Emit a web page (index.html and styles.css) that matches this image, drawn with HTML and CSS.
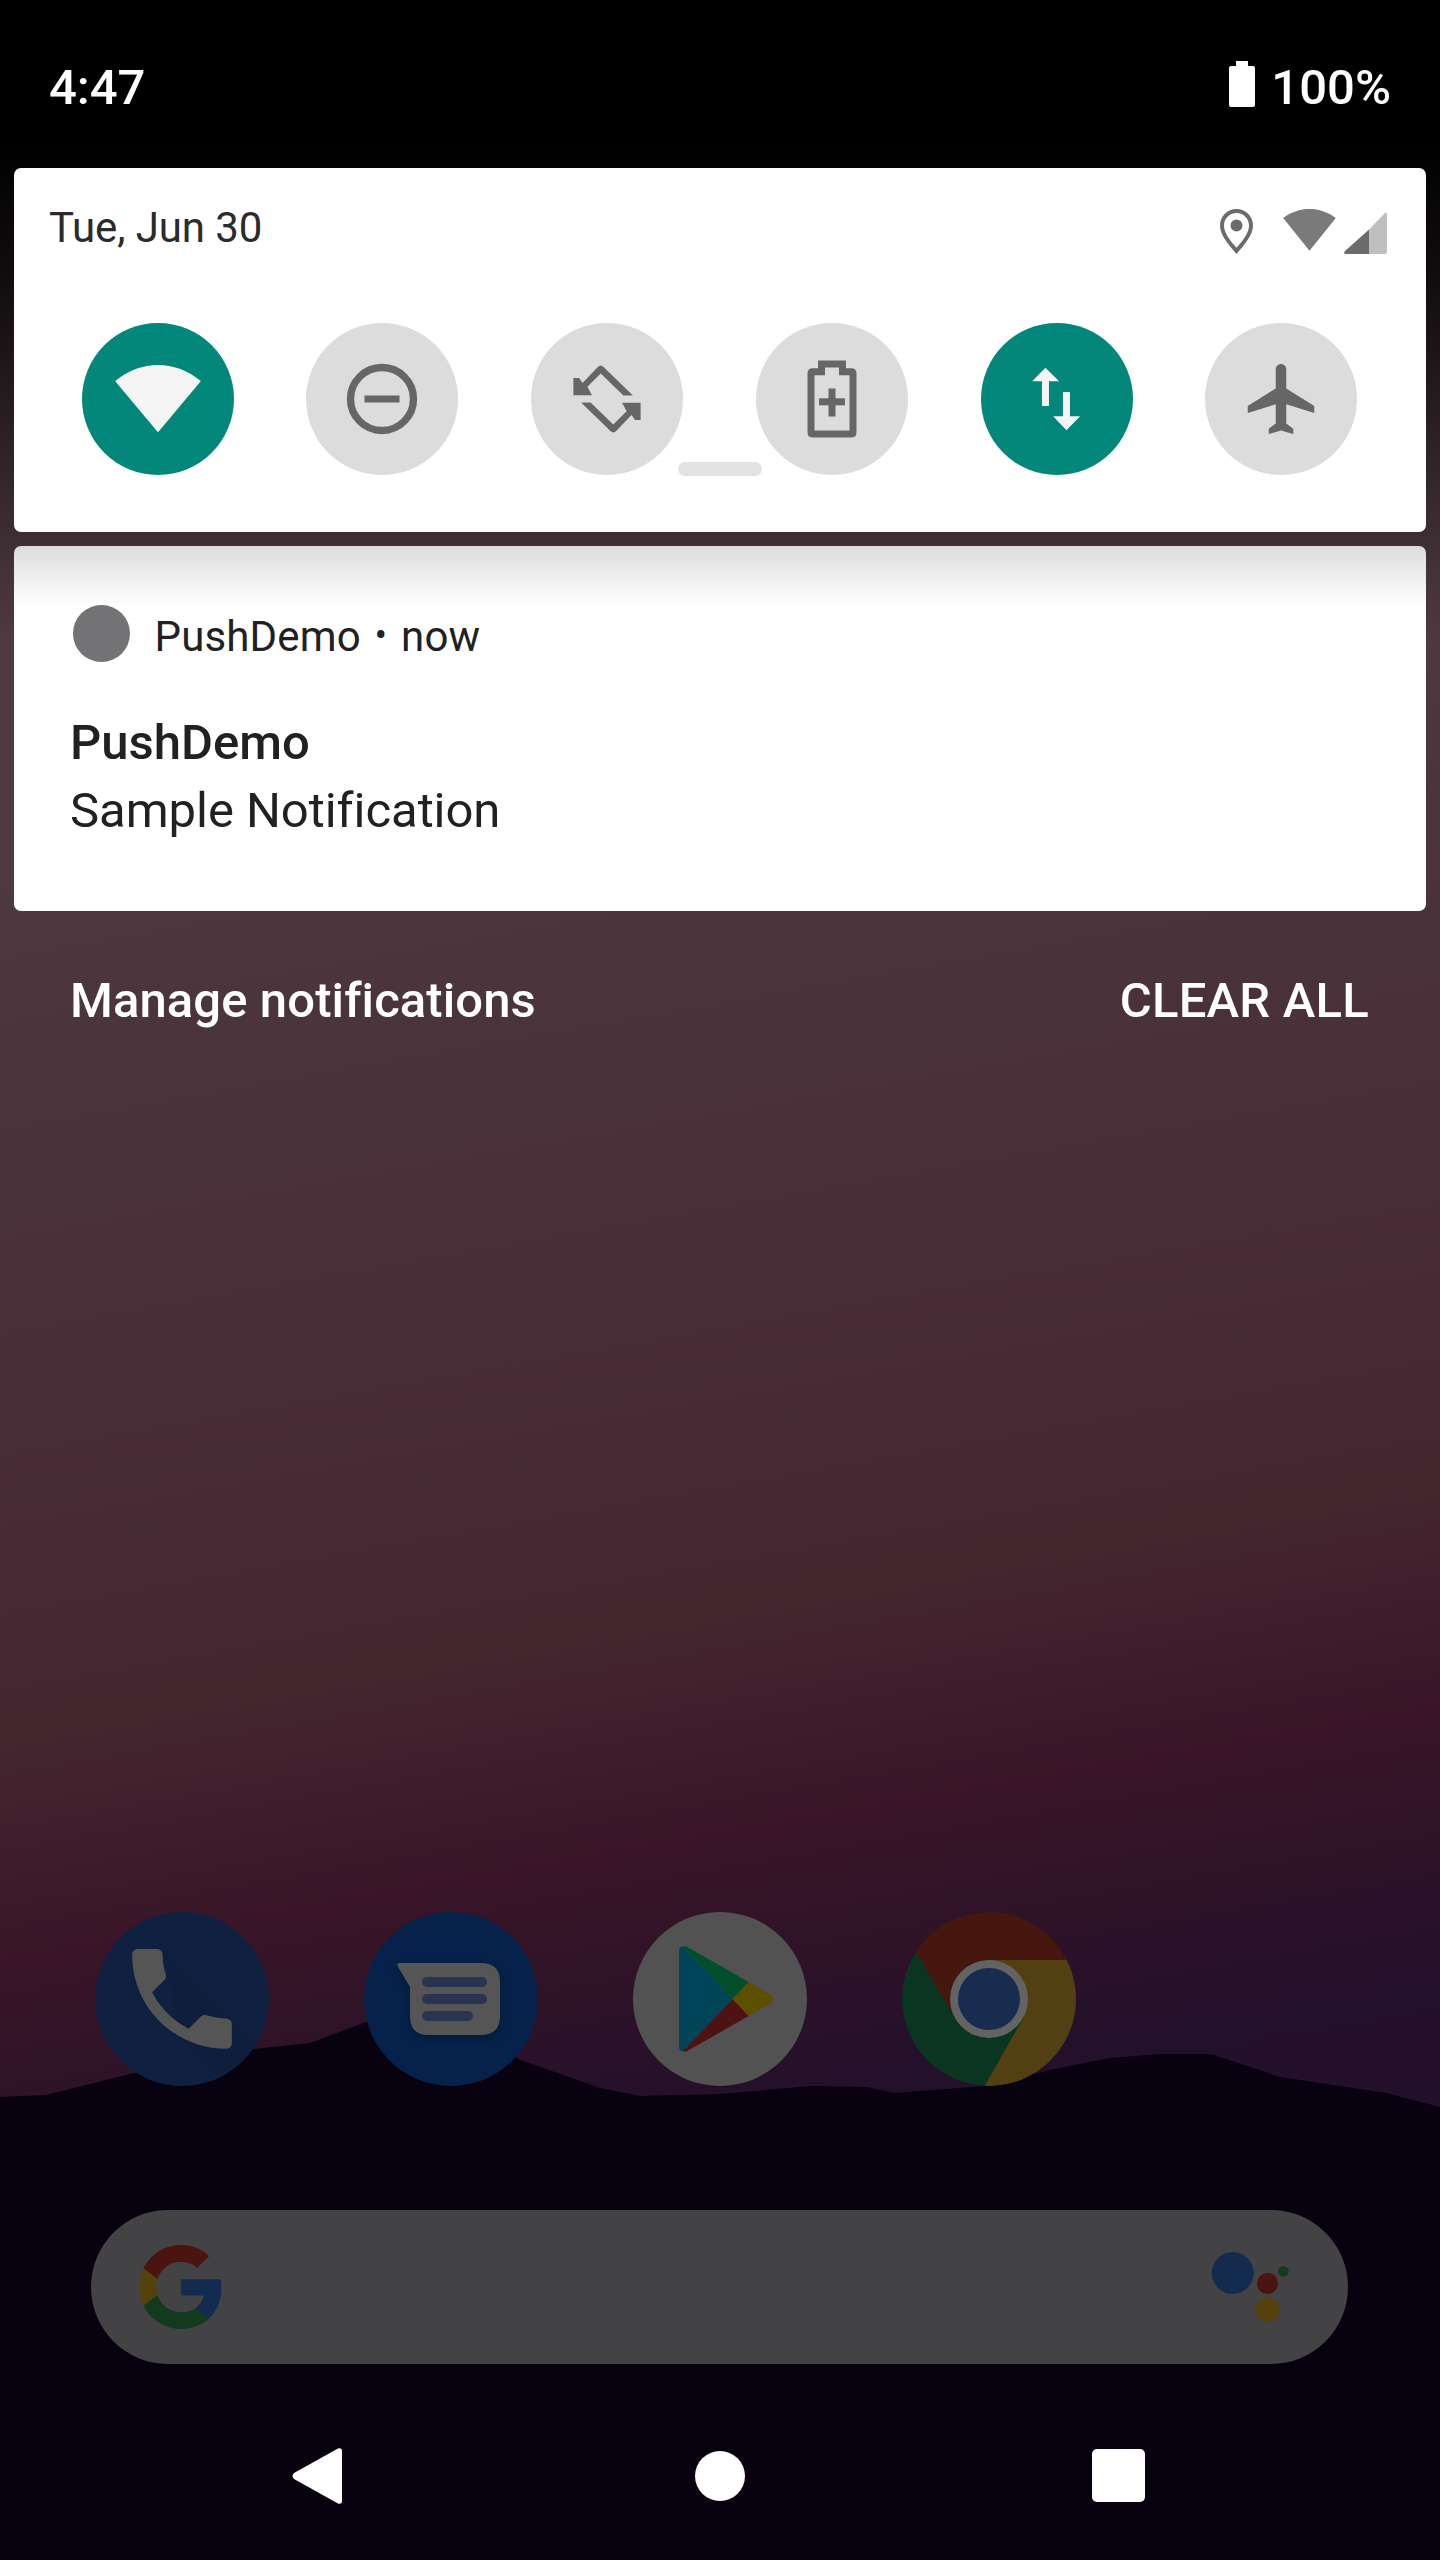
FILE: index.html
```html
<!DOCTYPE html>
<html lang="en">

<head>
    <meta charset="UTF-8">
    <meta name="viewport" content="width=device-width, initial-scale=1.0">
    <title>Notification shade</title>
    <link rel="stylesheet" href="styles.css">
</head>

<body>
    <!-- wallpaper sits behind everything -->
    <div class="wallpaper">
        <svg class="mountains" viewBox="0 0 1440 560" preserveAspectRatio="none">
            <path d="M0 97 L46 95 L130 74 L253 49 L310 43 L366 22 L450 8 L518 59 L600 88 L640 96 L720 94 L812 86 L867 87 L894 93 L986 86 L1050 70 L1110 58 L1160 54 L1211 54 L1280 77 L1386 93 L1440 107 V560 H0 Z" />
        </svg>
    </div>
    <div class="scrim"></div>

    <div class="page">
        <header class="status-bar">
            <span class="status-text">4:47</span>
            <div class="battery">
                <svg class="battery-icon" viewBox="0 0 26 46">
                    <path d="M7 0h12v5h5q2 0 2 2v37q0 2-2 2H2q-2 0-2-2V7q0-2 2-2h5z" />
                </svg>
                <span class="status-text">100%</span>
            </div>
        </header>

        <section class="qs-panel">
            <div class="qs-top">
                <span class="qs-date">Tue, Jun 30</span>
                <div class="qs-status">
                    <svg class="icon-pin" viewBox="0 0 33 45">
                        <path fill-rule="evenodd" d="M16.5 0C7.4 0 0 7.3 0 16.5 0 26 8 35 16.500 45 25 35 33 26 33 16.500 33 7.300 25.600 0 16.500 0zm0 4C23.400 4 29 9.500 29 16.500c0 7-5.300 14.200-12.500 22.300C9.300 30.700 4 23.500 4 16.500 4 9.500 9.600 4 16.500 4z" />
                        <circle cx="16.500" cy="16.500" r="6" />
                    </svg>
                    <svg class="icon-wifi-small" viewBox="0 3 24 18.600">
                        <path d="M12.010 21.490L23.640 7c-.45-.34-4.930-4-11.640-4C5.280 3 .81 6.660.36 7l11.630 14.490.01.01.01-.01z" />
                    </svg>
                    <svg class="icon-signal" viewBox="0 0 43 42">
                        <path class="signal-empty" d="M25 17.500L41 1q2-1.500 2 1v38q0 2-2 2H25z" />
                        <path d="M25 17.500V42H2q-2.500 0-1.500-2.500z" />
                    </svg>
                </div>
            </div>

            <div class="qs-tiles">
                <div class="tile tile-on">
                    <svg viewBox="0 0 24 24">
                        <path stroke="currentColor" stroke-width=".5" stroke-linejoin="round" d="M12.010 21.100L23.900 6.900c-.45-.34-5.200-4.400-11.900-4.400C5.280 2.500.55 6.560.1 6.900L11.990 21.100z" />
                    </svg>
                </div>
                <div class="tile">
                    <svg viewBox="0 0 24 24">
                        <circle cx="12" cy="12" r="9" fill="none" stroke="currentColor" stroke-width="2.100" />
                        <rect x="7" y="11" width="10" height="2" />
                    </svg>
                </div>
                <div class="tile">
                    <svg viewBox="0 0 24 24">
                        <path d="M19.400 11H16.700L10.200 4.700 6.400 8.500 7.700 10.900H2.400V6H4L5 7.400 9.300 2.900Q10.200 2 11.100 2.900z" />
                        <path d="M19.400 11H16.700L10.200 4.700 6.400 8.500 7.700 10.900H2.400V6H4L5 7.400 9.300 2.900Q10.200 2 11.100 2.900z" transform="rotate(180 12 12)" />
                    </svg>
                </div>
                <div class="tile">
                    <svg viewBox="0 0 24 24">
                        <path fill-rule="evenodd" d="M8 1H16V3.200H17.500Q19 3.200 19 4.700V21.500Q19 23 17.500 23H6.500Q5 23 5 21.500V4.700Q5 3.200 6.500 3.200H8zM10 3V5.200H7V21H17V5.200H14V3z" />
                        <rect x="8.300" y="11.800" width="7.400" height="2" />
                        <rect x="11" y="9" width="2" height="8" />
                    </svg>
                </div>
                <div class="tile tile-on">
                    <svg viewBox="0 0 24 24">
                        <path d="M4.900 6.900L8.700 3.100 12.600 6.900H9.700V14H7.700V6.900z" />
                        <path d="M13.700 10H15.700V16.900H18.600L14.700 20.900 10.900 16.900H13.700z" />
                    </svg>
                </div>
                <div class="tile">
                    <svg viewBox="0 0 24 24">
                        <path transform="translate(.5 0)" d="M21 16v-2l-8-5V3.500c0-.83-.67-1.500-1.500-1.500S10 2.670 10 3.500V9l-8 5v2l8-2.500V19l-2 1.500V22l3.500-1 3.500 1v-1.500L13 19v-5.500l8 2.500z" />
                    </svg>
                </div>
            </div>
            <div class="qs-handle"></div>
        </section>

        <section class="notification">
            <div class="notif-header">
                <span class="notif-dot"></span>
                <div class="notif-meta">
                    <span>PushDemo</span>
                    <span class="notif-sep">•</span>
                    <span>now</span>
                </div>
            </div>
            <div class="notif-title">PushDemo</div>
            <div class="notif-body">Sample Notification</div>
        </section>

        <div class="shade-footer">
            <span>Manage notifications</span>
            <span class="clear-all">CLEAR ALL</span>
        </div>

        <div class="spacer"></div>

        <div class="dock">
            <div class="app app-phone">
                <svg viewBox="0 0 174 174">
                    <path class="phone-shadow" d="M68 37L207 176H135L85 125Z" />
                    <path class="phone-glyph" transform="translate(20.500 20.500) scale(5.540)" d="M6.620 10.790c1.440 2.830 3.760 5.140 6.590 6.590l2.200-2.200c.27-.27.67-.36 1.020-.24 1.120.37 2.330.57 3.570.57.550 0 1 .45 1 1V20c0 .55-.45 1-1 1-9.390 0-17-7.610-17-17 0-.55.45-1 1-1h3.500c.55 0 1 .45 1 1 0 1.250.2 2.450.57 3.570.11.35.03.74-.25 1.020l-2.200 2.200z" />
                </svg>
            </div>
            <div class="app app-messages">
                <svg viewBox="0 0 174 174">
                    <path class="msg-bubble" d="M35 51H117Q136 51 136 70V104Q136 123 117 123H64Q46 123 46 104V75L33.500 54Q33 51 35 51Z" />
                    <rect class="msg-line" x="58" y="65" width="65" height="10" rx="5" />
                    <rect class="msg-line" x="58" y="82" width="65" height="10" rx="5" />
                    <rect class="msg-line" x="58" y="99" width="51" height="10" rx="5" />
                </svg>
            </div>
            <div class="app app-play">
                <svg viewBox="0 0 174 174">
                    <path fill="#004459" d="M46 40Q46 34 50 35L99.600 87 50 139Q46 140 46 134Z" />
                    <path fill="#004f2a" d="M50 35Q52 33 56 36L115.700 70 99.600 87Z" />
                    <path fill="#4f1212" d="M50 139Q52 141 56 138L115.700 104 99.600 87Z" />
                    <path fill="#5c4f00" d="M115.700 70L138 83Q142 87 138 91L115.700 104 99.600 87Z" />
                </svg>
            </div>
            <div class="app app-chrome">
                <svg viewBox="0 0 174 174">
                    <circle cx="87" cy="87" r="87" fill="#0a3520" />
                    <path fill="#45170f" d="M87 48H165A87 87 0 0 0 13.800 40L54 108 87 87Z" />
                    <path fill="#524013" d="M87 48H165A87 87 0 0 1 82.600 174L122 105 87 87Z" />
                    <circle cx="87" cy="87" r="39" fill="#636363" />
                    <circle cx="87" cy="87" r="31" fill="#182c50" />
                </svg>
            </div>
        </div>

        <div class="search-bar">
            <svg class="google-g" viewBox="2 2 44 44">
                <path fill="#142b50" d="M45.120 24.500c0-1.560-.14-3.060-.4-4.500H24v8.510h11.840c-.51 2.750-2.060 5.080-4.390 6.640v5.520h7.110c4.160-3.830 6.560-9.470 6.560-15.170z" />
                <path fill="#133a1c" d="M24 46c5.940 0 10.920-1.970 14.560-5.330l-7.110-5.520c-1.970 1.320-4.490 2.100-7.450 2.100-5.730 0-10.580-3.870-12.310-9.070H4.340v5.700C7.960 41.070 15.400 46 24 46z" />
                <path fill="#55410b" d="M11.690 28.180C11.250 26.860 11 25.450 11 24s.25-2.860.69-4.180v-5.700H4.340C2.850 17.090 2 20.450 2 24c0 3.550.85 6.910 2.340 9.880l7.350-5.700z" />
                <path fill="#4a1510" d="M24 10.750c3.230 0 6.130 1.110 8.410 3.290l6.310-6.310C34.910 4.180 29.930 2 24 2 15.400 2 7.960 6.930 4.340 14.120l7.350 5.700c1.730-5.200 6.580-9.070 12.310-9.070z" />
            </svg>
            <svg class="assistant" viewBox="0 0 80 74">
                <circle cx="22.700" cy="23" r="21" fill="#142b50" />
                <circle cx="57.500" cy="33.500" r="10.500" fill="#4a1510" />
                <circle cx="57.500" cy="59.600" r="12.300" fill="#55410b" />
                <circle cx="73.300" cy="21.300" r="5.300" fill="#133a1c" />
            </svg>
        </div>

        <nav class="nav-bar">
            <svg class="nav-back" viewBox="0 0 50 56">
                <path d="M46 .5Q50-.5 50 3V53Q50 56.500 46 55.500L2 31Q-1 28 2 25Z" />
            </svg>
            <span class="nav-home"></span>
            <span class="nav-recent"></span>
        </nav>
    </div>
</body>

</html>
```

FILE: styles.css
```css
html,
body {
    margin: 0;
    padding: 0;
}

body {
    position: relative;
    width: 1440px;
    height: 2560px;
    overflow: hidden;
    font-family: Roboto, "Liberation Sans", sans-serif;
    background-color: #07000f;
}

/* Wallpaper */
.wallpaper {
    position: absolute;
    inset: 0;
    background: linear-gradient(170deg, #4e3a40 0%, #4e3a40 30%, #4a333b 40%, #482c36 52%, #44262f 62%, #391527 70%, #24102a 79%, #1e0d26 100%);
}

.mountains {
    position: absolute;
    left: 0;
    top: 2000px;
    width: 1440px;
    height: 560px;
    fill: #08010f;
}

.scrim {
    position: absolute;
    left: 0;
    top: 0;
    width: 100%;
    height: 640px;
    background: linear-gradient(to bottom, #000 0, #000 140px, rgba(0, 0, 0, 0.75) 300px, rgba(0, 0, 0, 0.25) 520px, rgba(0, 0, 0, 0) 640px);
}

.page {
    position: relative;
    height: 2560px;
    display: flex;
    flex-direction: column;
}

/* Status bar */
.status-bar {
    height: 168px;
    padding: 0 49px;
    box-sizing: border-box;
    display: flex;
    align-items: center;
    justify-content: space-between;
    color: #fff;
    font-size: 49px;
    font-weight: 500;
}

.status-text {
    margin-top: 6px;
}

.battery {
    display: flex;
    align-items: center;
    gap: 16px;
}

.battery-icon {
    width: 26px;
    height: 46px;
    fill: #fff;
}

/* Quick settings */
.qs-panel {
    position: relative;
    height: 364px;
    margin: 0 14px;
    background-color: #fff;
    border-radius: 7px;
}

.qs-top {
    height: 155px;
    padding: 0 39px 0 35px;
    box-sizing: border-box;
    display: flex;
    justify-content: space-between;
    align-items: flex-start;
}

.qs-date {
    margin-top: 35px;
    font-size: 42px;
    line-height: 50px;
    letter-spacing: -0.1px;
    color: #2b2b2b;
}

.qs-status {
    margin-top: 41px;
    display: flex;
    align-items: flex-start;
}

.icon-pin {
    width: 33px;
    height: 45px;
    fill: #6b6b6b;
    margin-right: 29px;
}

.icon-wifi-small {
    width: 55px;
    height: 42px;
    fill: #7a7a7a;
    margin-right: 7px;
}

.icon-signal {
    width: 43px;
    height: 42px;
    margin-top: 3px;
    fill: #6b6b6b;
}

.signal-empty {
    fill: #bfbfbf;
}

.qs-tiles {
    padding-left: 67.5px;
    display: flex;
    gap: 72.8px;
}

.tile {
    width: 152px;
    height: 152px;
    border-radius: 50%;
    background-color: #dcdcdc;
    color: #666;
    display: flex;
    align-items: center;
    justify-content: center;
}

.tile svg {
    width: 84px;
    height: 84px;
    fill: currentColor;
    overflow: visible;
}

.tile-on {
    background-color: #03877a;
    color: #f5f5f5;
}

.qs-handle {
    position: absolute;
    left: 664px;
    top: 294px;
    width: 84px;
    height: 14px;
    border-radius: 7px;
    background-color: #e3e3e3;
}

/* Notification card */
.notification {
    height: 365px;
    margin: 14px 14px 0;
    padding: 59px 56px 0;
    box-sizing: border-box;
    border-radius: 7px;
    background: linear-gradient(to bottom, #dcdcdc 0, #fff 60px);
    color: #212121;
}

.notif-header {
    height: 57px;
    display: flex;
    align-items: center;
    font-size: 42px;
    line-height: 57px;
}

.notif-dot {
    width: 57px;
    height: 57px;
    margin: 0 24.5px 0 3px;
    border-radius: 50%;
    background-color: #737375;
}

.notif-meta {
    display: flex;
    align-items: center;
    margin-top: 6px;
    letter-spacing: 0.15px;
}

.notif-sep {
    margin: 0 14px;
    font-size: 36px;
}

.notif-title {
    margin-top: 47px;
    font-size: 49px;
    line-height: 68px;
    font-weight: 500;
}

.notif-body {
    font-size: 49px;
    line-height: 68px;
    letter-spacing: -0.05px;
}

/* Footer under the card */
.shade-footer {
    padding: 58px 71px 0 70px;
    display: flex;
    justify-content: space-between;
    color: #fff;
    font-size: 49px;
    font-weight: 500;
    line-height: 64px;
    letter-spacing: 0.1px;
}

.clear-all {
    letter-spacing: 0.25px;
}

.spacer {
    flex: 1;
}

/* Dock */
.dock {
    padding-left: 95px;
    display: flex;
    gap: 95px;
}

.app {
    width: 174px;
    height: 174px;
    border-radius: 50%;
    overflow: hidden;
}

.app svg {
    display: block;
    width: 100%;
    height: 100%;
}

.app-phone {
    background-color: #0f2040;
}

.phone-glyph {
    fill: #555;
}

.phone-shadow {
    fill: rgba(0, 0, 0, 0.05);
}

.app-messages {
    background-color: #06224a;
}

.msg-bubble {
    fill: #555;
    filter: drop-shadow(0 4px 5px rgba(0, 0, 0, 0.25));
}

.msg-line {
    fill: #2a3450;
}

.app-play {
    background-color: #525252;
}

/* Search bar */
.search-bar {
    height: 154px;
    margin: 124px 92px 0 91px;
    padding: 35px 58px 0 48px;
    box-sizing: border-box;
    border-radius: 77px;
    background-color: #434244;
    display: flex;
    justify-content: space-between;
    align-items: flex-start;
}

.google-g {
    width: 84px;
    height: 84px;
}

.assistant {
    width: 80px;
    height: 74px;
    margin-top: 5px;
}

/* Navigation bar */
.nav-bar {
    height: 196px;
    padding: 84px 295px 0 292px;
    box-sizing: border-box;
    display: flex;
    justify-content: space-between;
    align-items: flex-start;
}

.nav-back {
    width: 50px;
    height: 56px;
    fill: #fff;
}

.nav-home {
    width: 50px;
    height: 50px;
    margin: 3px 0 0 6px;
    border-radius: 50%;
    background-color: #fff;
}

.nav-recent {
    width: 53px;
    height: 53px;
    margin-top: 1px;
    border-radius: 5px;
    background-color: #fff;
}
```
